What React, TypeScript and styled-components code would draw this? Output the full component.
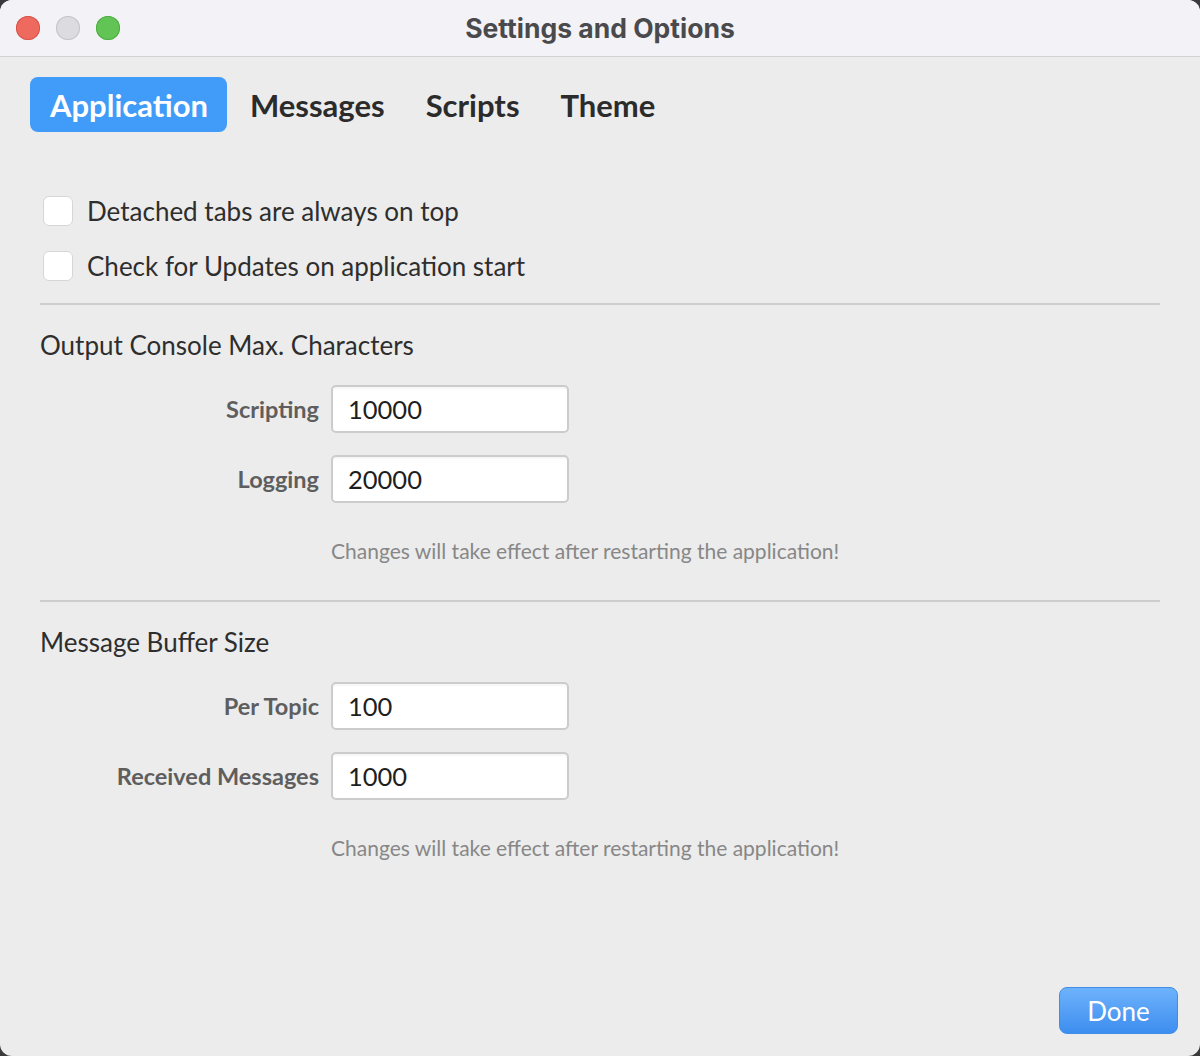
import { Fragment } from 'react'
import styled, { createGlobalStyle } from 'styled-components'

const GlobalStyle = createGlobalStyle`
  html, body {
    margin: 0;
    padding: 0;
    background: #3a3a3c;
  }
  body {
    font-family: Lato, 'Noto Sans', sans-serif;
  }
`

const Window = styled.div`
  width: 1200px;
  height: 1056px;
  background: #ececec;
  border-radius: 12px;
  overflow: hidden;
  display: flex;
  flex-direction: column;
`

const TitleBar = styled.header`
  height: 56px;
  flex: 0 0 auto;
  background: #f2f2f7;
  border-bottom: 1px solid #d2d2d4;
  display: flex;
  align-items: center;
  position: relative;
`

const Lights = styled.div`
  display: flex;
  gap: 16px;
  padding-left: 16px;
`

const Light = styled.span<{ $color: string; $border: string }>`
  width: 24px;
  height: 24px;
  border-radius: 50%;
  background: ${p => p.$color};
  box-shadow: inset 0 0 0 1px ${p => p.$border};
`

const Title = styled.h1`
  position: absolute;
  left: 0;
  right: 0;
  margin: 0;
  text-align: center;
  font-family: Inter, 'Noto Sans', sans-serif;
  font-weight: 700;
  font-size: 26.5px;
  line-height: 32px;
  color: #4a4a4c;
  pointer-events: none;
`

const Body = styled.main`
  flex: 1;
  display: flex;
  flex-direction: column;
  padding: 20px 40px 22px 40px;
`

const Tabs = styled.nav`
  display: flex;
  margin-left: -10px;
`

const Tab = styled.button<{ $active?: boolean }>`
  border: 0;
  border-radius: 8px;
  height: 55px;
  padding: 0 19px 0 20px;
  margin-right: ${p => (p.$active ? '3px' : '2px')};
  font-family: Lato, 'Noto Sans', sans-serif;
  font-weight: 700;
  font-size: 31px;
  color: ${p => (p.$active ? '#ffffff' : '#2b2b2b')};
  background: ${p => (p.$active ? '#409bf9' : 'transparent')};
`

const Checks = styled.div`
  display: flex;
  flex-direction: column;
  gap: 25px;
  margin-top: 64px;
  padding-left: 3px;
`

const CheckRow = styled.label`
  display: flex;
  align-items: center;
  gap: 14px;
  font-size: 26px;
  line-height: 30px;
  color: #2e2e2e;
`

const Box = styled.span`
  width: 30px;
  height: 30px;
  box-sizing: border-box;
  border-radius: 6px;
  background: #ffffff;
  border: 1px solid #d6d6d6;
`

const Divider = styled.hr<{ $top: number }>`
  border: 0;
  height: 2px;
  background: #cdcdcd;
  margin: ${p => p.$top}px 0 0 0;
`

const SectionTitle = styled.h2`
  margin: 25px 0 0 0;
  font-weight: 400;
  font-size: 26px;
  line-height: 30px;
  color: #2e2e2e;
`

const FieldGrid = styled.div`
  display: grid;
  grid-template-columns: 279px 238px;
  column-gap: 12px;
  row-gap: 22px;
  align-items: center;
  margin-top: 25px;
`

const FieldLabel = styled.span`
  text-align: right;
  font-weight: 700;
  font-size: 23.5px;
  line-height: 28px;
  color: #5e5e5e;
`

const Input = styled.div`
  height: 48px;
  box-sizing: border-box;
  background: #ffffff;
  border: 2px solid #cccccc;
  border-radius: 5px;
  box-shadow: inset 0 2px 2px rgba(0, 0, 0, 0.04);
  display: flex;
  align-items: center;
  padding-left: 15px;
  font-size: 25.5px;
  color: #1e1e1e;
`

const Note = styled.p`
  margin: 36px 0 0 0;
  padding-left: 291px;
  font-size: 21px;
  line-height: 24px;
  color: #878787;
`

const Footer = styled.footer`
  margin-top: auto;
  display: flex;
  justify-content: flex-end;
  margin-right: -18px;
`

const DoneButton = styled.button`
  width: 119px;
  height: 47px;
  border-radius: 8px;
  border: 1px solid #3f8de6;
  background: linear-gradient(#6eb2fb, #3d8ef0);
  color: #ffffff;
  font-family: Lato, 'Noto Sans', sans-serif;
  font-size: 26px;
`

type Field = { label: string; value: string }

const consoleFields: Field[] = [
  { label: 'Scripting', value: '10000' },
  { label: 'Logging', value: '20000' }
]

const bufferFields: Field[] = [
  { label: 'Per Topic', value: '100' },
  { label: 'Received Messages', value: '1000' }
]

const NOTE = 'Changes will take effect after restarting the application!'

function Fields({ items }: { items: Field[] }) {
  return (
    <FieldGrid>
      {items.map(f => (
        <Fragment key={f.label}>
          <FieldLabel>{f.label}</FieldLabel>
          <Input>{f.value}</Input>
        </Fragment>
      ))}
    </FieldGrid>
  )
}

export default function App() {
  return (
    <>
      <GlobalStyle />
      <Window>
        <TitleBar>
          <Lights>
            <Light $color="#ee6a5f" $border="#d8554b" />
            <Light $color="#dcdce0" $border="#c4c4c8" />
            <Light $color="#61c454" $border="#4fae43" />
          </Lights>
          <Title>Settings and Options</Title>
        </TitleBar>
        <Body>
          <Tabs>
            <Tab $active>Application</Tab>
            <Tab>Messages</Tab>
            <Tab>Scripts</Tab>
            <Tab>Theme</Tab>
          </Tabs>
          <Checks>
            <CheckRow>
              <Box />
              Detached tabs are always on top
            </CheckRow>
            <CheckRow>
              <Box />
              Check for Updates on application start
            </CheckRow>
          </Checks>
          <Divider $top={22} />
          <SectionTitle>Output Console Max. Characters</SectionTitle>
          <Fields items={consoleFields} />
          <Note>{NOTE}</Note>
          <Divider $top={37} />
          <SectionTitle>Message Buffer Size</SectionTitle>
          <Fields items={bufferFields} />
          <Note>{NOTE}</Note>
          <Footer>
            <DoneButton>Done</DoneButton>
          </Footer>
        </Body>
      </Window>
    </>
  )
}
